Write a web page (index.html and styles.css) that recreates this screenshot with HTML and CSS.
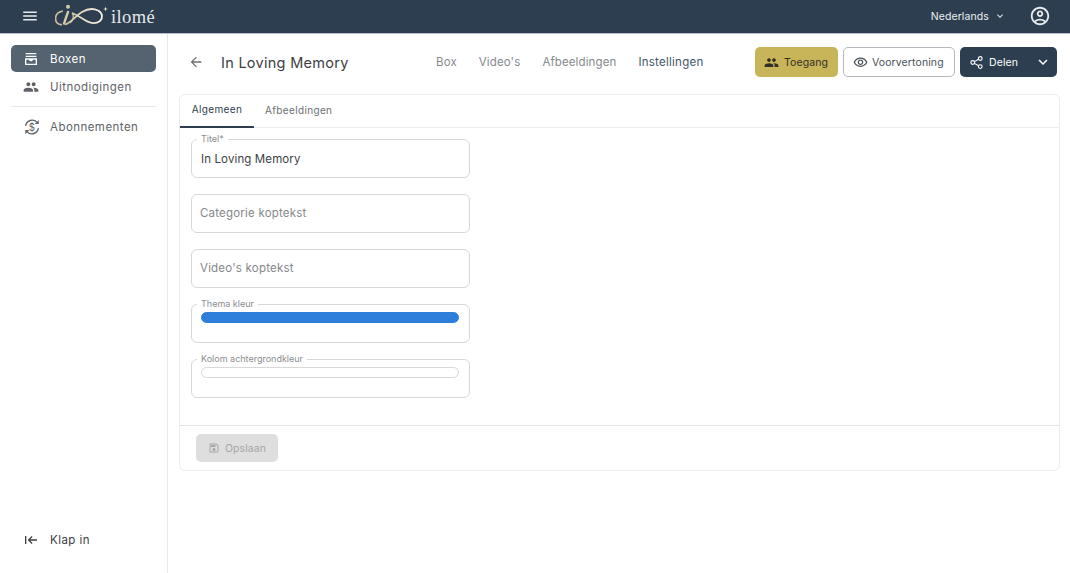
FILE: index.html
```html
<!DOCTYPE html>
<html lang="nl">
<head>
    <meta charset="UTF-8">
    <meta name="viewport" content="width=device-width, initial-scale=1.0">
    <title>In Loving Memory</title>
    <link rel="stylesheet" href="styles.css">
</head>
<body>
    <header class="topbar">
        <svg class="icon menuIcon" viewBox="0 0 24 24"><path d="M3 18h18v-2H3v2zm0-5h18v-2H3v2zm0-7v2h18V6H3z"/></svg>
        <div class="logo">
            <svg class="logoMark" viewBox="0 0 54 26">
                <defs>
                    <linearGradient id="gold" x1="0" x2="1" y1="0" y2="0">
                        <stop offset="0" stop-color="#c9bb98"/>
                        <stop offset="0.45" stop-color="#e6dcc2"/>
                        <stop offset="1" stop-color="#f2eee2"/>
                    </linearGradient>
                </defs>
                <path d="M8 8 C3 9 0.500 12 0.500 15.500 C0.500 20 4 22 7 21.500" fill="none" stroke="#c9bb98" stroke-width="1.700"/>
                <path d="M17 10 C19 12 19 17 15 20" fill="none" stroke="#d5c9aa" stroke-width="1.200"/>
                <circle cx="13" cy="3.800" r="2" fill="#d8cba9"/>
                <path d="M13.300 8 C12 12 10.500 16 8.800 21.500" fill="none" stroke="#d8cba9" stroke-width="2.400"/>
                <path d="M10 21.500 C16 20 20 13 27 9 C32 6 38 5 43 7.500 C48 10 48 15 45 18 C41 21 35 20.500 29 16.500 C25 14 21 11.500 17 10" fill="none" stroke="url(#gold)" stroke-width="1.800"/>
                <path d="M50.500 3.500 l.6 1.900 1.900 .6 -1.900 .6 -.6 1.900 -.6 -1.900 -1.900 -.6 1.900 -.6z" fill="#e9e0c8"/>
            </svg>
            <span class="logoText">ilomé</span>
        </div>
        <div class="topRight">
            <span class="lang">Nederlands</span>
            <svg class="icon langArrow" viewBox="0 0 24 24"><path d="M16.590 8.590L12 13.170 7.410 8.590 6 10l6 6 6-6z"/></svg>
            <svg class="icon userIcon" viewBox="0 0 24 24"><path d="M12 2C6.480 2 2 6.480 2 12s4.480 10 10 10 10-4.480 10-10S17.520 2 12 2zM7.350 18.500C8.660 17.560 10.260 17 12 17s3.340.56 4.650 1.500c-1.310.94-2.910 1.500-4.650 1.500s-3.340-.56-4.650-1.500zm10.790-1.380C16.450 15.800 14.320 15 12 15s-4.450.8-6.140 2.120C4.700 15.730 4 13.950 4 12c0-4.420 3.580-8 8-8s8 3.580 8 8c0 1.950-.7 3.730-1.860 5.120zM12 6c-1.930 0-3.500 1.570-3.500 3.500S10.070 13 12 13s3.500-1.570 3.500-3.500S13.930 6 12 6zm0 5c-.83 0-1.500-.67-1.500-1.500S11.170 8 12 8s1.500.67 1.500 1.500S12.830 11 12 11z"/></svg>
        </div>
    </header>

    <div class="layout">
        <aside class="sidebar">
            <nav class="sideNav">
                <a class="sideItem active">
                    <svg class="icon sideIcon" viewBox="0 0 24 24"><path d="M4 3h16v2H4zM4 7h16v2H4zM3 11h18v10H3zm2 2v6h14v-6h-4c-.3 1.500-1.500 2.500-3 2.500S9.300 14.500 9 13z"/></svg>
                    <span>Boxen</span>
                </a>
                <a class="sideItem">
                    <svg class="icon sideIcon" viewBox="0 0 24 24"><path d="M16 11c1.660 0 2.990-1.340 2.990-3S17.660 5 16 5c-1.660 0-3 1.340-3 3s1.340 3 3 3zm-8 0c1.660 0 2.990-1.340 2.990-3S9.660 5 8 5C6.340 5 5 6.340 5 8s1.340 3 3 3zm0 2c-2.330 0-7 1.170-7 3.500V19h14v-2.500c0-2.330-4.670-3.500-7-3.500zm8 0c-.29 0-.62.02-.97.05 1.160.84 1.970 1.970 1.970 3.450V19h6v-2.500c0-2.330-4.670-3.500-7-3.500z"/></svg>
                    <span>Uitnodigingen</span>
                </a>
                <div class="sideDivider"></div>
                <a class="sideItem">
                    <svg class="icon sideIcon subIcon" viewBox="0 0 24 24">
                        <path d="M3.500 10.500 A8.800 8.800 0 0 1 18.500 5.500 M20.500 13.500 A8.800 8.800 0 0 1 5.500 18.500" fill="none" stroke="#5f6368" stroke-width="1.800"/>
                        <path d="M21 2.500v5.500h-5.500zM3 21.500v-5.500h5.500z"/>
                        <text x="12" y="16.800" text-anchor="middle" class="subDollar">$</text>
                    </svg>
                    <span>Abonnementen</span>
                </a>
            </nav>
            <a class="sideItem collapse">
                <svg class="icon sideIcon" viewBox="0 0 24 24"><path d="M3 6h2v12H3zM13 6l1.400 1.400L10.800 11H21v2H10.800l3.600 3.600L13 18l-6-6z"/></svg>
                <span>Klap in</span>
            </a>
        </aside>

        <main class="content">
            <div class="pageHead">
                <div class="pageTitle">
                    <svg class="icon backIcon" viewBox="0 0 24 24"><path d="M20 11H7.830l5.590-5.590L12 4l-8 8 8 8 1.410-1.410L7.830 13H20v-2z"/></svg>
                    <h1>In Loving Memory</h1>
                </div>
                <nav class="pageTabs">
                    <a>Box</a>
                    <a>Video's</a>
                    <a>Afbeeldingen</a>
                    <a class="current">Instellingen</a>
                </nav>
                <div class="actions">
                    <button class="btn btnGold">
                        <svg class="icon" viewBox="0 0 24 24"><path d="M16 11c1.660 0 2.990-1.340 2.990-3S17.660 5 16 5c-1.660 0-3 1.340-3 3s1.340 3 3 3zm-8 0c1.660 0 2.990-1.340 2.990-3S9.660 5 8 5C6.340 5 5 6.340 5 8s1.340 3 3 3zm0 2c-2.330 0-7 1.170-7 3.500V19h14v-2.500c0-2.330-4.670-3.500-7-3.500zm8 0c-.29 0-.62.02-.97.05 1.160.84 1.970 1.970 1.970 3.450V19h6v-2.500c0-2.330-4.670-3.500-7-3.500z"/></svg>
                        Toegang
                    </button>
                    <button class="btn btnOutline">
                        <svg class="icon" viewBox="0 0 24 24"><path d="M12 6c3.790 0 7.170 2.130 8.820 5.500C19.170 14.870 15.790 17 12 17s-7.170-2.130-8.820-5.500C4.830 8.130 8.210 6 12 6m0-2C7 4 2.730 7.110 1 11.500 2.730 15.890 7 19 12 19s9.270-3.110 11-7.500C21.270 7.110 17 4 12 4zm0 5c1.380 0 2.500 1.120 2.500 2.500S13.380 14 12 14s-2.500-1.120-2.500-2.500S10.620 9 12 9m0-2c-2.480 0-4.500 2.020-4.500 4.500S9.520 16 12 16s4.500-2.020 4.500-4.500S14.480 7 12 7z"/></svg>
                        Voorvertoning
                    </button>
                    <button class="btn btnDark">
                        <svg class="icon shareIcon" viewBox="0 0 24 24">
                            <circle cx="18" cy="5.500" r="3"/><circle cx="18" cy="18.500" r="3"/><circle cx="6" cy="12" r="3"/>
                            <path d="M8.700 10.600l6.600-3.700M8.700 13.400l6.600 3.700"/>
                        </svg>
                        <span class="btnLabel">Delen</span>
                        <svg class="icon chevron" viewBox="0 0 24 24"><path d="M16.590 8.590L12 13.170 7.410 8.590 6 10l6 6 6-6z"/></svg>
                    </button>
                </div>
            </div>

            <section class="card">
                <div class="cardTabs">
                    <a class="cardTab selected">Algemeen</a>
                    <a class="cardTab">Afbeeldingen</a>
                </div>
                <div class="form">
                    <div class="field">
                        <label class="fieldLabel">Titel*</label>
                        <span class="fieldValue">In Loving Memory</span>
                    </div>
                    <div class="field">
                        <span class="fieldHolder">Categorie koptekst</span>
                    </div>
                    <div class="field">
                        <span class="fieldHolder">Video's koptekst</span>
                    </div>
                    <div class="field colorField">
                        <label class="fieldLabel">Thema kleur</label>
                        <div class="colorBar blue"></div>
                    </div>
                    <div class="field colorField">
                        <label class="fieldLabel">Kolom achtergrondkleur</label>
                        <div class="colorBar"></div>
                    </div>
                </div>
                <div class="cardFoot">
                    <button class="btn btnDisabled">
                        <svg class="icon" viewBox="0 0 24 24"><path d="M17 3H5c-1.110 0-2 .9-2 2v14c0 1.100.89 2 2 2h14c1.100 0 2-.9 2-2V7l-4-4zm2 16H5V5h11.170L19 7.830V19zm-7-7c-1.660 0-3 1.340-3 3s1.340 3 3 3 3-1.340 3-3-1.340-3-3-3zM6 6h9v4H6z"/></svg>
                        Opslaan
                    </button>
                </div>
            </section>
        </main>
    </div>
</body>
</html>
```

FILE: styles.css
```css
*{
    box-sizing: border-box;
}
html,body{
    height: 100%;
}
body{
    margin: 0;
    overflow: hidden;
    background: #fff;
    color: #3c4043;
    font-family: "Inter", "Noto Sans", sans-serif;
    font-size: 11.5px;
    display: flex;
    flex-direction: column;
}
.icon{
    width: 16px;
    height: 16px;
    fill: currentColor;
    flex: none;
}

/* top bar */
.topbar{
    height: 34px;
    flex: none;
    background: #2d3e50;
    border-bottom: 1px solid #b9c0c7;
    color: #fff;
    display: flex;
    align-items: center;
    padding: 0 19px 1px 21px;
}
.menuIcon{
    width: 18px;
    height: 18px;
    color: #e8eaec;
}
.logo{
    display: flex;
    align-items: center;
    margin-left: 16px;
}
.logoMark{
    width: 54px;
    height: 26px;
}
.logoText{
    font-family: "Liberation Serif", serif;
    font-size: 18.5px;
    letter-spacing: 0.4px;
    color: #e6e8ea;
    margin-left: 2px;
    padding-top: 2px;
}
.topRight{
    margin-left: auto;
    display: flex;
    align-items: center;
}
.lang{
    font-size: 10.5px;
    letter-spacing: 0.1px;
    color: #eceef0;
}
.langArrow{
    width: 12px;
    height: 12px;
    margin-left: 5px;
    color: #dfe2e5;
}
.userIcon{
    width: 22px;
    height: 22px;
    margin-left: 23px;
    color: #e8eaec;
}

/* page */
.layout{
    flex: 1;
    display: flex;
    min-height: 0;
}
.sidebar{
    width: 168px;
    flex: none;
    border-right: 1px solid #e8e8e8;
    padding: 11px 11px 20px;
    display: flex;
    flex-direction: column;
    justify-content: space-between;
}
.sideItem{
    height: 27px;
    display: flex;
    align-items: center;
    padding-left: 12px;
    border-radius: 5px;
    color: #5f6368;
    font-size: 11.5px;
    letter-spacing: 0.45px;
}
.sideItem span{
    margin-left: 11px;
}
.sideItem.active{
    background: #55626f;
    color: #fff;
    margin-bottom: 1px;
}
.sideDivider{
    height: 1px;
    background: #e8e8e8;
    margin: 6px 0 6px;
}
.subIcon{
    width: 18px;
    height: 18px;
    margin: 0 -2px 0 0;
}
.subDollar{
    font-size: 13px;
    font-family: "Inter", sans-serif;
    fill: #5f6368;
}
.collapse{
    color: #3c4043;
}

.content{
    flex: 1;
    min-width: 0;
    padding: 13px 10px 0 11px;
}
.pageHead{
    height: 30px;
    display: flex;
    align-items: center;
    margin-bottom: 17px;
}
.pageTitle{
    width: 257px;
    flex: none;
    display: flex;
    align-items: center;
    padding-left: 9px;
}
.backIcon{
    color: #6b6f73;
}
.pageTitle h1{
    margin: 0 0 0 17px;
    font-size: 14.5px;
    font-weight: 400;
    color: #3c4043;
    letter-spacing: 0.28px;
}
.pageTabs{
    display: flex;
    gap: 22px;
    font-size: 11.5px;
    color: #85898d;
    letter-spacing: 0.12px;
}
.pageTabs .current{
    color: #44566a;
    letter-spacing: 0.25px;
}
.actions{
    margin-left: auto;
    margin-right: 3px;
    display: flex;
    gap: 5px;
}
.btn{
    height: 30px;
    border: none;
    border-radius: 5px;
    font-family: inherit;
    font-size: 10.5px;
    font-weight: 400;
    letter-spacing: 0.1px;
    display: flex;
    align-items: center;
    gap: 5px;
    padding: 0 9px;
}
.btn .icon{
    width: 15px;
    height: 15px;
}
.btnGold{
    width: 83px;
    background: #c8b559;
    color: #2f2f28;
}
.btnOutline{
    width: 112px;
    background: #fff;
    border: 1px solid #b4b9bf;
    color: #4a5058;
    gap: 4px;
}
.btnDark{
    width: 97px;
    background: #2d3e50;
    color: #fff;
    padding-right: 5px;
}
.btnLabel{
    flex: 1;
    text-align: left;
}
.btn .chevron{
    width: 18px;
    height: 18px;
}
.shareIcon circle,.shareIcon path{
    fill: none;
    stroke: currentColor;
    stroke-width: 1.800;
}

/* card */
.card{
    border: 1px solid #ececec;
    border-radius: 6px;
    height: 377px;
    display: flex;
    flex-direction: column;
}
.cardTabs{
    height: 33px;
    flex: none;
    display: flex;
    border-bottom: 1px solid #ececec;
}
.cardTab{
    height: 33px;
    display: flex;
    align-items: center;
    justify-content: center;
    padding: 0 11px 4px;
    font-size: 10px;
    letter-spacing: 0.35px;
    color: #6b6f73;
}
.cardTab.selected{
    width: 74px;
    color: #2d3e50;
    border-bottom: 2px solid #2d3e50;
}
.form{
    flex: 1;
    padding: 11px 0 0 11px;
    display: flex;
    flex-direction: column;
    gap: 16px;
}
.field{
    width: 279px;
    height: 39px;
    border: 1px solid #d8d8d8;
    border-radius: 6px;
    position: relative;
    display: flex;
    align-items: center;
    padding: 0 9px 1px 9px;
    font-size: 11.5px;
    letter-spacing: 0.2px;
}
.fieldLabel{
    position: absolute;
    top: -6px;
    left: 5px;
    padding: 0 4px;
    background: #fff;
    font-size: 9px;
    line-height: 9px;
    letter-spacing: 0;
    color: #8a8d90;
}
.fieldValue{
    color: #3c4043;
    margin-top: 2px;
    letter-spacing: 0.12px;
}
.fieldHolder{
    margin-left: -1px;
    color: #85888b;
}
.colorField{
    align-items: flex-start;
    padding: 7px 10px 0 9px;
}
.colorBar{
    width: 100%;
    height: 11px;
    border-radius: 6px;
    border: 1px solid #d8d8d8;
    background: #fff;
}
.colorBar.blue{
    background: #2e7fdc;
    border-color: #2e7fdc;
}
.cardFoot{
    height: 45px;
    flex: none;
    border-top: 1px solid #e4e4e4;
    padding: 8px 0 0 16px;
}
.btnDisabled{
    width: 82px;
    height: 28px;
    background: #dedede;
    color: #a6a6a6;
    justify-content: center;
    padding: 0;
    gap: 5px;
}
.btn.btnDisabled .icon{
    width: 12px;
    height: 12px;
}
```
